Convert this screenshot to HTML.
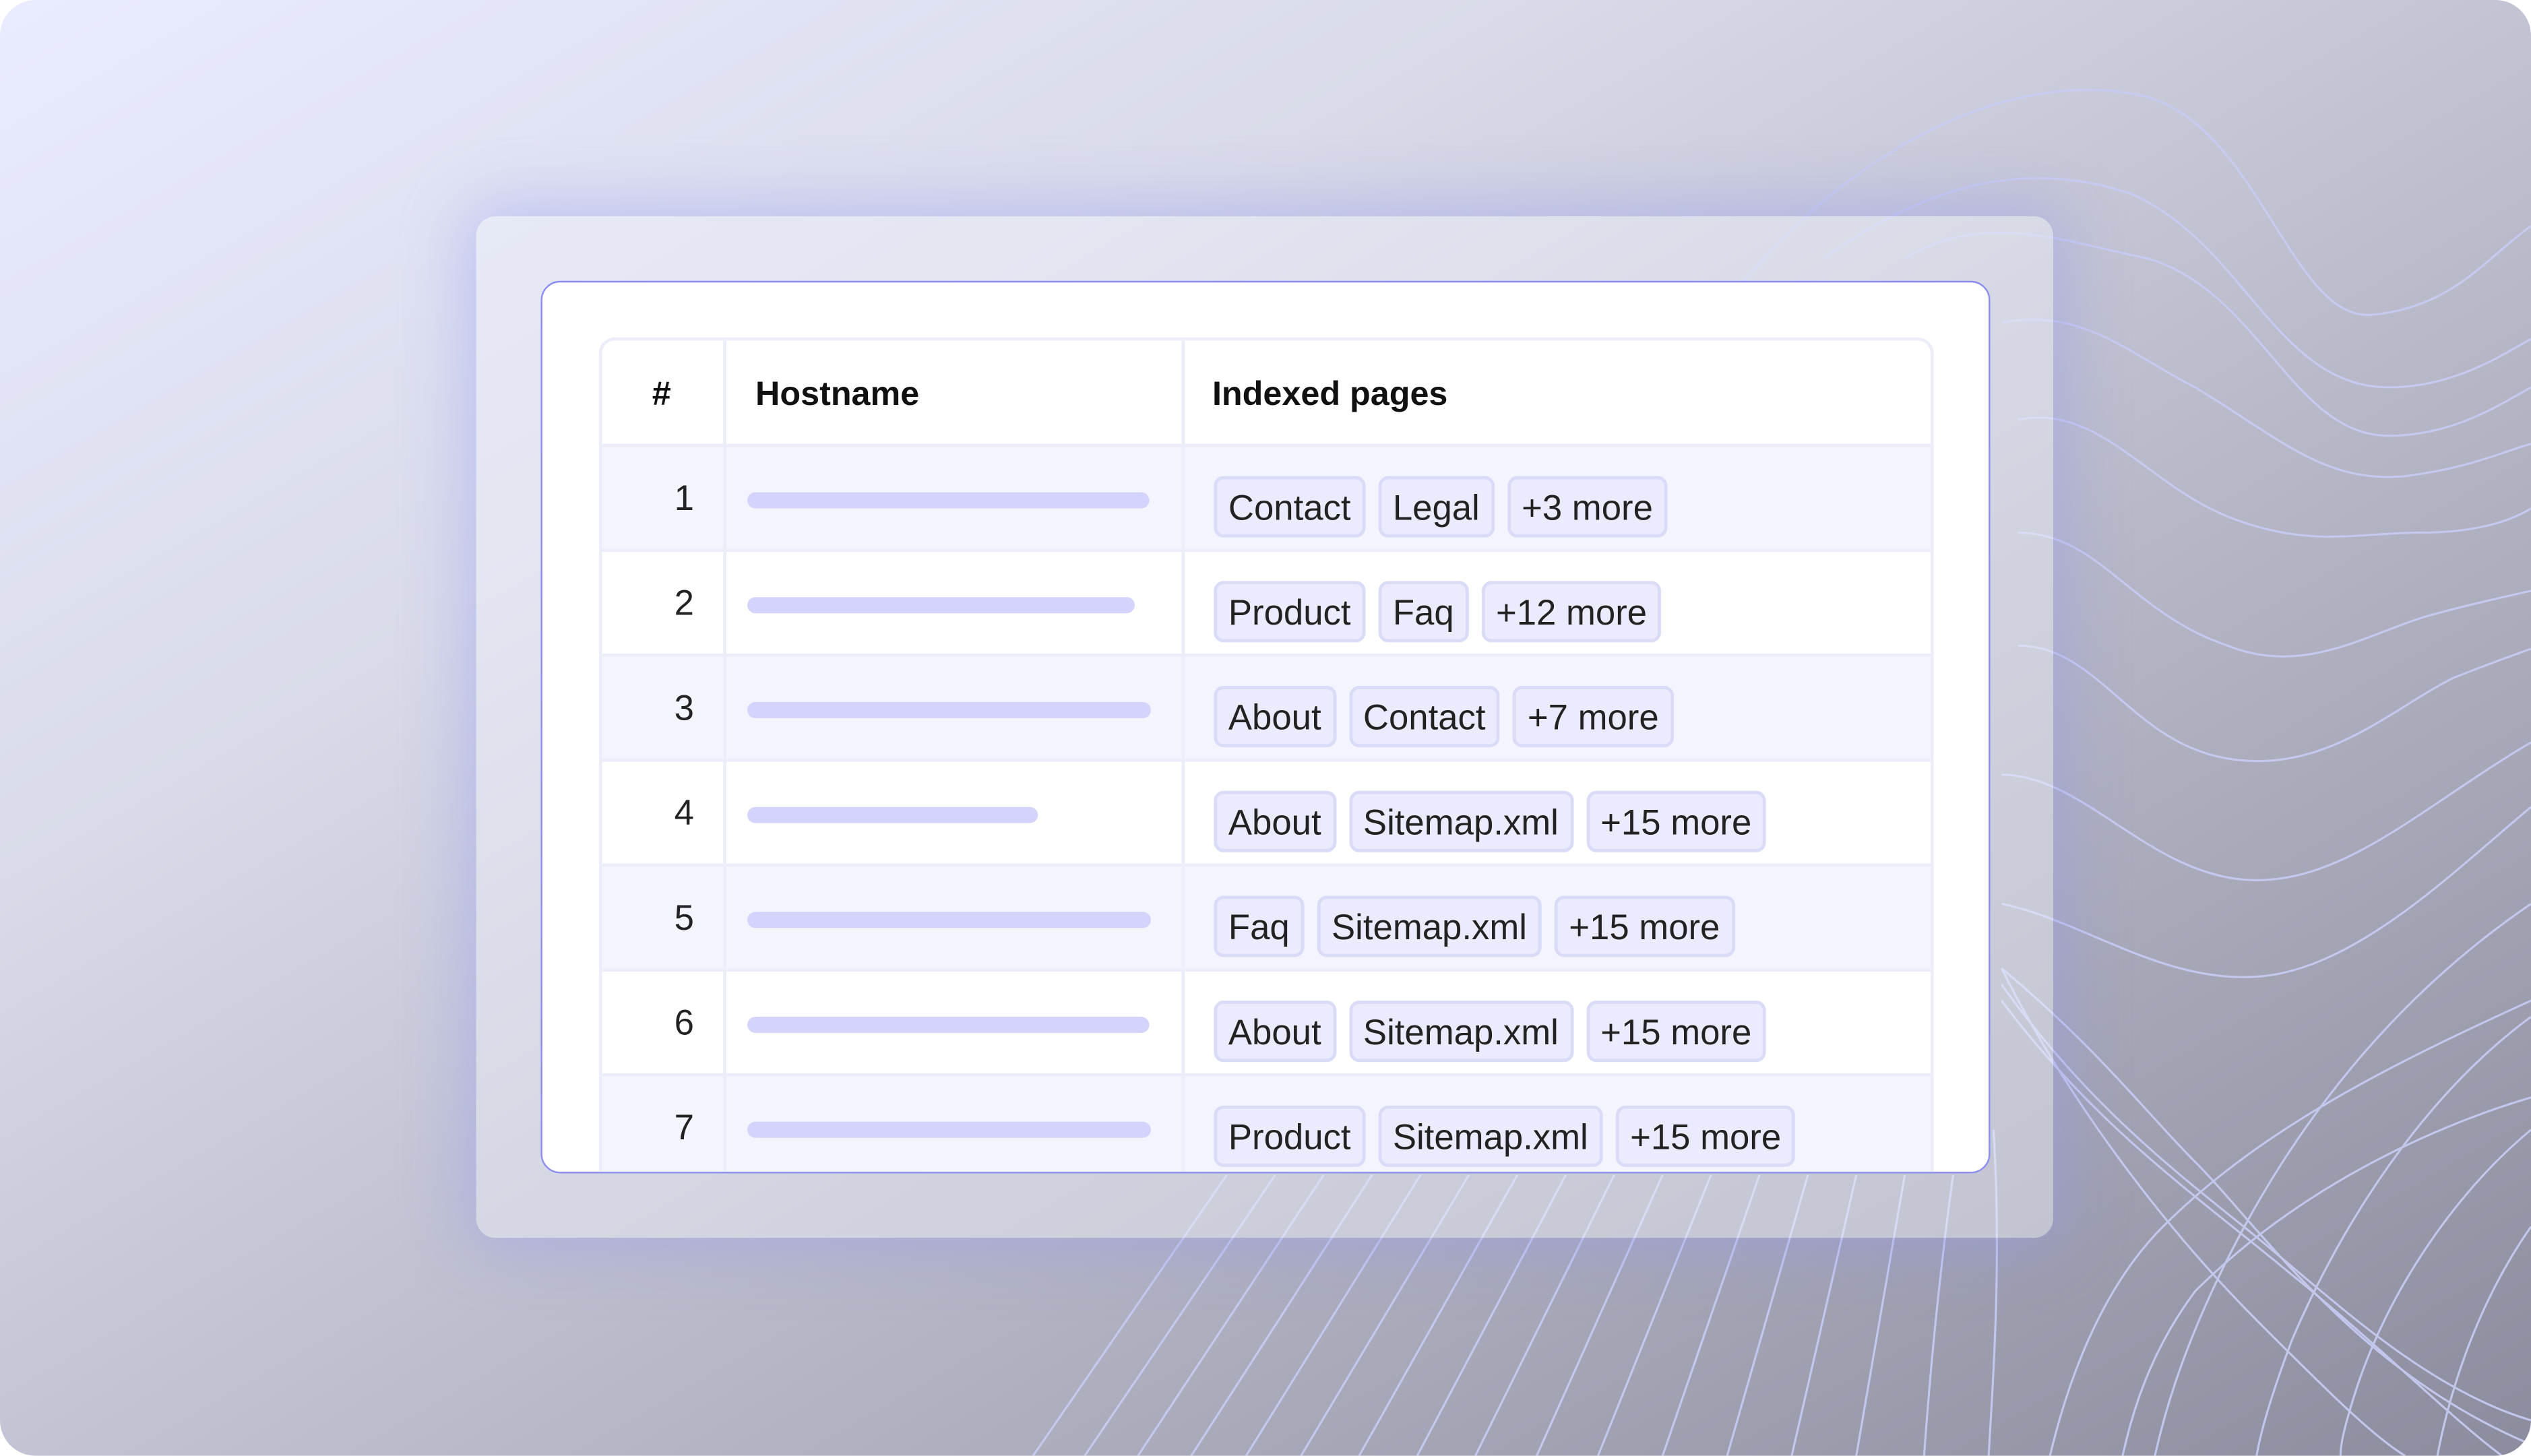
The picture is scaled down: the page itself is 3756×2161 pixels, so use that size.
<!DOCTYPE html>
<html><head><meta charset="utf-8"><style>
html,body{margin:0;padding:0;background:#fff;width:3756px;height:2160px;overflow:hidden}
#s{position:absolute;left:0;top:0;width:1568px;height:902px;transform:scale(2.39541);transform-origin:0 0;font-family:"Liberation Sans",sans-serif}
#bg{position:absolute;inset:0;border-radius:22px;background:linear-gradient(150deg,#e9ecfe 0%,#d9dbea 30%,#b7b8c8 60%,#8b8c9d 100%);overflow:hidden}
#panel{position:absolute;left:295px;top:134px;width:977px;height:633px;border-radius:12px;background:rgba(240,241,250,0.45);box-shadow:0 0 40px 6px rgba(150,150,240,0.45)}
#card{position:absolute;left:335px;top:174px;width:896px;height:551px;border:1.5px solid #8b8cf0;border-radius:12px;background:#fff;overflow:hidden}
#tbl{position:absolute;left:35px;top:34px;width:823px;border:2px solid #ecedf9;border-bottom:none;border-radius:10px 10px 0 0;overflow:hidden}
.r{position:relative;height:65px;border-top:2px solid #ecedf9;box-sizing:border-box}
.r:first-child{border-top:none;height:64px}
.r.o{background:#f3f4fd}
.c1,.c2,.c3{position:absolute;top:0;bottom:0}
.c1{left:0;width:75px;border-right:2px solid #ecedf9}
.c2{left:77px;width:282px;border-right:2px solid #ecedf9}
.c3{left:361px;right:0}
.h{font-weight:bold;font-size:21px;color:#111;line-height:68px}
.n{position:absolute;right:18px;top:19px;font-size:22px;color:#222}
.bar{position:absolute;left:13px;top:28px;height:10px;border-radius:5px;background:#d3d3fb}
.tags{position:absolute;left:18px;top:18px;display:flex;gap:8px}
.t{height:38px;box-sizing:border-box;border:2px solid #d9dbf7;background:#ebebfd;border-radius:6px;padding:0 7px;font-size:22px;line-height:36px;color:#222}
svg{position:absolute;left:0;top:0}
</style></head><body><div id="s"><div id="bg">
<svg width="1568" height="902" fill="none" stroke="#c9ccf4" stroke-width="1.3" opacity="0.9">
<path d="M1080 175 C1150 90 1250 40 1330 60 C1400 80 1420 200 1470 195 C1520 190 1540 160 1568 140"/>
<path d="M1130 160 C1200 110 1260 100 1320 120 C1390 150 1410 240 1480 240 C1520 240 1550 220 1568 210"/>
<path d="M1180 160 C1230 130 1280 150 1330 160 C1400 180 1420 270 1480 270 C1520 270 1550 250 1568 240"/>
<path d="M1240 200 C1290 190 1320 220 1360 240 C1410 270 1440 300 1490 295 C1530 290 1550 280 1568 275"/>
<path d="M1250 260 C1300 250 1330 300 1380 320 C1430 340 1460 330 1500 330 C1540 330 1560 320 1568 315"/>
<path d="M1250 330 C1300 330 1320 380 1380 400 C1430 420 1470 390 1510 380 C1540 372 1560 368 1568 366"/>
<path d="M1250 400 C1300 400 1320 460 1380 470 C1440 480 1480 440 1520 420 C1545 410 1560 405 1568 402"/>
<path d="M1240 480 C1290 480 1330 540 1390 545 C1450 550 1500 500 1568 460"/>
<path d="M1240 560 C1290 570 1340 610 1400 605 C1460 600 1520 540 1568 500"/>
<path d="M1240 600 C1300 650 1330 690 1360 720 C1400 760 1460 850 1568 895"/>
<path d="M1240 610 C1290 680 1340 720 1390 760 C1440 800 1500 860 1568 880"/>
<path d="M1240 620 C1300 700 1360 740 1420 790 C1470 830 1520 880 1550 902"/>
<path d="M1240 600 C1280 680 1340 760 1400 820 C1440 860 1470 890 1490 902"/>
<path d="M1568 560 C1480 620 1420 700 1380 780 C1350 840 1340 880 1335 902"/>
<path d="M1568 630 C1500 680 1450 760 1420 830 C1405 870 1400 890 1398 902"/>
<path d="M1568 700 C1520 740 1480 800 1460 860 C1452 885 1450 895 1450 902"/>
<path d="M1568 760 C1540 800 1520 850 1510 902"/>
<path d="M1568 620 C1480 660 1400 700 1340 760 C1300 800 1280 860 1270 902"/>
<path d="M1568 680 C1500 700 1420 740 1360 800 C1330 840 1320 880 1315 902"/>
<path d="M760 728 L640 902"/><path d="M790 728 L672 902"/><path d="M820 728 L705 902"/>
<path d="M850 728 L738 902"/><path d="M880 728 L772 902"/><path d="M910 728 L806 902"/>
<path d="M940 728 L842 902"/><path d="M970 728 L878 902"/><path d="M1000 728 L914 902"/>
<path d="M1030 728 L952 902"/><path d="M1060 728 L990 902"/><path d="M1090 728 L1030 902"/>
<path d="M1120 728 L1070 902"/><path d="M1150 728 L1110 902"/><path d="M1180 728 L1150 902"/>
<path d="M1210 728 C1200 800 1195 860 1192 902"/><path d="M1235 700 C1240 780 1235 850 1232 902"/>
</svg>
<div id="panel"></div>
<div id="card"><div id="tbl">
<div class="r"><div class="c1"><span class="h" style="position:absolute;left:31px">#</span></div><div class="c2"><span class="h" style="position:absolute;left:18px">Hostname</span></div><div class="c3"><span class="h" style="position:absolute;left:17px">Indexed pages</span></div></div>
<div class="r o"><div class="c1"><span class="n">1</span></div><div class="c2"><div class="bar" style="width:249px"></div></div><div class="c3"><div class="tags"><span class="t">Contact</span><span class="t">Legal</span><span class="t">+3 more</span></div></div></div>
<div class="r"><div class="c1"><span class="n">2</span></div><div class="c2"><div class="bar" style="width:240px"></div></div><div class="c3"><div class="tags"><span class="t">Product</span><span class="t">Faq</span><span class="t">+12 more</span></div></div></div>
<div class="r o"><div class="c1"><span class="n">3</span></div><div class="c2"><div class="bar" style="width:250px"></div></div><div class="c3"><div class="tags"><span class="t">About</span><span class="t">Contact</span><span class="t">+7 more</span></div></div></div>
<div class="r"><div class="c1"><span class="n">4</span></div><div class="c2"><div class="bar" style="width:180px"></div></div><div class="c3"><div class="tags"><span class="t">About</span><span class="t">Sitemap.xml</span><span class="t">+15 more</span></div></div></div>
<div class="r o"><div class="c1"><span class="n">5</span></div><div class="c2"><div class="bar" style="width:250px"></div></div><div class="c3"><div class="tags"><span class="t">Faq</span><span class="t">Sitemap.xml</span><span class="t">+15 more</span></div></div></div>
<div class="r"><div class="c1"><span class="n">6</span></div><div class="c2"><div class="bar" style="width:249px"></div></div><div class="c3"><div class="tags"><span class="t">About</span><span class="t">Sitemap.xml</span><span class="t">+15 more</span></div></div></div>
<div class="r o"><div class="c1"><span class="n">7</span></div><div class="c2"><div class="bar" style="width:250px"></div></div><div class="c3"><div class="tags"><span class="t">Product</span><span class="t">Sitemap.xml</span><span class="t">+15 more</span></div></div></div>
</div></div>
</div></div></body></html>
